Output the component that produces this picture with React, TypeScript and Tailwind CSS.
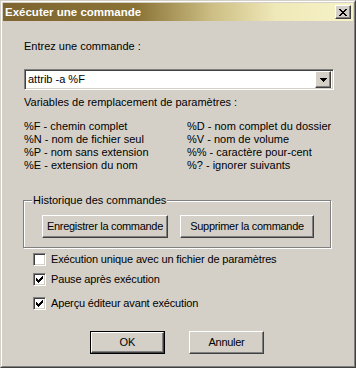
import React from "react";

const raised =
  "border border-t-white border-l-white border-r-[#404040] border-b-[#404040] shadow-[inset_-1px_-1px_0_#808080,inset_1px_1px_0_#d4d0c8]";
const sunken =
  "border border-t-[#808080] border-l-[#808080] border-r-white border-b-white shadow-[inset_1px_1px_0_#404040,inset_-1px_-1px_0_#d4d0c8]";

const vars: [string, string][] = [
  ["%F - chemin complet", "%D - nom complet du dossier"],
  ["%N - nom de fichier seul", "%V - nom de volume"],
  ["%P - nom sans extension", "%% - caractère pour-cent"],
  ["%E - extension du nom", "%? - ignorer suivants"],
];

function Check({ checked, label, className }: { checked: boolean; label: string; className?: string }) {
  return (
    <div className={"flex items-center h-[13px] " + (className ?? "")}>
      <div className={"w-[13px] h-[13px] bg-white flex items-center justify-center " + sunken}>
        {checked && (
          <svg width="7" height="7" viewBox="0 0 7 7">
            <path d="M0 2h1v1h1v1h1V3h1V2h1V1h1V0h1v3H6v1H5v1H4v1H3v1H2V6H1V5H0z" fill="#000" />
          </svg>
        )}
      </div>
      <span className="ml-[5px] tracking-[-0.15px]">{label}</span>
    </div>
  );
}

function Btn({ children, w, def }: { children: React.ReactNode; w: string; def?: boolean }) {
  if (def) {
    return (
      <div className={"h-[23px] border border-black " + w}>
        <div className={"h-full flex items-center justify-center " + raised}>{children}</div>
      </div>
    );
  }
  return (
    <div className={"h-[23px] flex items-center justify-center tracking-[-0.3px] " + raised + " " + w}>{children}</div>
  );
}

export default function App() {
  return (
    <div
      className="w-[356px] h-[368px] bg-[#d4d0c8] border border-t-[#d4d0c8] border-l-[#d4d0c8] border-r-[#404040] border-b-[#404040] text-[11px] leading-[13px] text-black"
      style={{ fontFamily: '"Liberation Sans", Arial, sans-serif' }}
    >
      <div className="h-full border border-t-white border-l-white border-r-[#808080] border-b-[#808080] p-px">
        {/* Title bar */}
        <div className="h-[18px] flex items-center pl-[2px] pr-[2px] bg-[linear-gradient(90deg,#7e6530_0%,#8a7236_38%,#cdbf85_60%,#efe8b8_78%,#f7f3c8_100%)]">
          <span className="text-white font-bold text-[11.5px]">Exécuter une commande</span>
          <div className={"ml-auto w-[16px] h-[14px] bg-[#d4d0c8] flex items-center justify-center " + raised}>
            <svg width="8" height="7" viewBox="0 0 8 7">
              <path d="M0 0h2v1h1v1h2V1h1V0h2v1H7v1H6v1H5v1h1v1h1v1h1v1H6V6H5V5H3v1H2v1H0V6h1V5h1V4h1V3H2V2H1V1H0z" fill="#000" />
            </svg>
          </div>
        </div>

        <div className="pl-[21px] pr-[20px]">
          <div className="mt-[19px]">Entrez une commande :</div>

          {/* Combo */}
          <div className={"mt-[16px] w-[310px] h-[21px] bg-white flex items-center p-[2px] " + sunken}>
            <span className="flex-1 pl-[1px]">attrib -a %F</span>
            <div className={"w-[16px] h-[17px] bg-[#d4d0c8] flex items-center justify-center " + raised}>
              <svg width="7" height="4" viewBox="0 0 7 4">
                <path d="M0 0h7v1H6v1H5v1H4v1H3V3H2V2H1V1H0z" fill="#000" />
              </svg>
            </div>
          </div>

          <div className="mt-[6px]">Variables de remplacement de paramètres :</div>

          <div className="mt-[11px] grid grid-cols-[163px_1fr]">
            {vars.map(([a, b]) => (
              <React.Fragment key={a}>
                <div>{a}</div>
                <div>{b}</div>
              </React.Fragment>
            ))}
          </div>

          {/* Group box */}
          <div className="relative mt-[28px] -ml-px w-[308px] h-[48px] border border-[#808080] shadow-[1px_1px_0_#fff,inset_1px_1px_0_#fff]">
            <span className="absolute -top-[7px] left-[8px] px-[1px] bg-[#d4d0c8]">Historique des commandes</span>
            <div className="flex gap-[12px] mt-[14px] ml-[18px]">
              <Btn w="w-[126px]">Enregistrer la commande</Btn>
              <Btn w="w-[134px]">Supprimer la commande</Btn>
            </div>
          </div>

          <div className="ml-[9px]">
            <Check className="mt-[5px]" checked={false} label="Exécution unique avec un fichier de paramètres" />
            <Check className="mt-[7px]" checked label="Pause après exécution" />
            <Check className="mt-[11px]" checked label="Aperçu éditeur avant exécution" />
          </div>

          <div className="flex gap-[24px] ml-[66px] mt-[21px]">
            <Btn w="w-[75px]" def>
              OK
            </Btn>
            <Btn w="w-[75px]">Annuler</Btn>
          </div>
        </div>
      </div>
    </div>
  );
}
